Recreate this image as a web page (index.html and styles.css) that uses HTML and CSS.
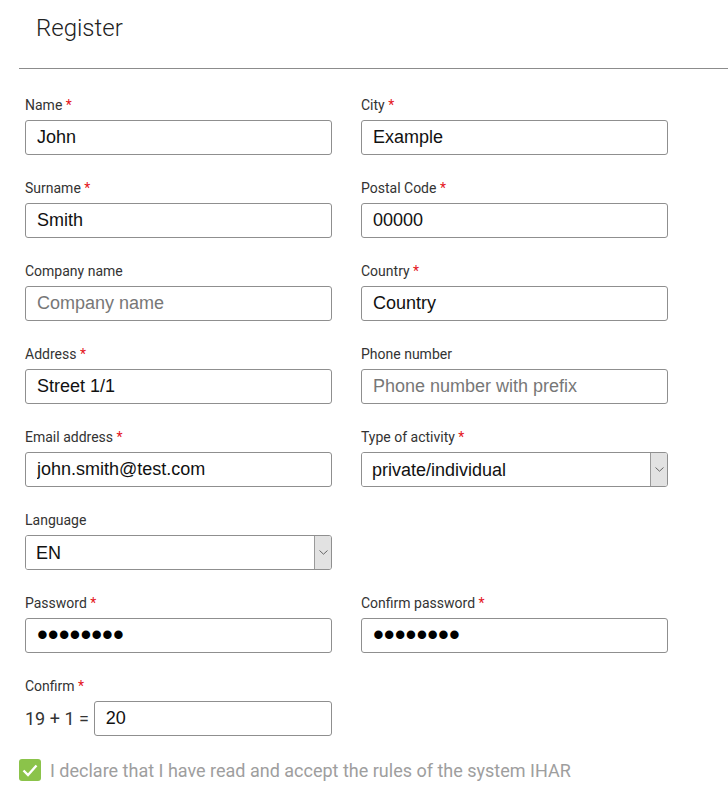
FILE: index.html
```html
<!DOCTYPE html>
<html lang="en">
    <head>
        <meta charset="UTF-8">
        <meta name="viewport" content="width=device-width, initial-scale=1.0">
        <title>Register</title>
        <link rel="stylesheet" href="styles.css">
    </head>
    <body>
        <div class="header">
            <h1>Register</h1>
        </div>

        <form class="register-form">
            <div class="field">
                <label>Name <span class="req">*</span></label>
                <input type="text" class="text-input" value="John">
            </div>
            <div class="field">
                <label>City <span class="req">*</span></label>
                <input type="text" class="text-input" value="Example">
            </div>

            <div class="field">
                <label>Surname <span class="req">*</span></label>
                <input type="text" class="text-input" value="Smith">
            </div>
            <div class="field">
                <label>Postal Code <span class="req">*</span></label>
                <input type="text" class="text-input" value="00000">
            </div>

            <div class="field">
                <label>Company name</label>
                <input type="text" class="text-input" placeholder="Company name">
            </div>
            <div class="field">
                <label>Country <span class="req">*</span></label>
                <input type="text" class="text-input" value="Country">
            </div>

            <div class="field">
                <label>Address <span class="req">*</span></label>
                <input type="text" class="text-input" value="Street 1/1">
            </div>
            <div class="field">
                <label>Phone number</label>
                <input type="text" class="text-input" placeholder="Phone number with prefix">
            </div>

            <div class="field">
                <label>Email address <span class="req">*</span></label>
                <input type="text" class="text-input" value="john.smith@test.com">
            </div>
            <div class="field">
                <label>Type of activity <span class="req">*</span></label>
                <div class="select-box">
                    <select class="select-input">
                        <option>private/individual</option>
                        <option>company</option>
                    </select>
                    <span class="select-arrow">
                        <svg width="9" height="5" viewBox="0 0 9 5"><path d="M0.5 0.5 L4.5 4.2 L8.5 0.5" fill="none" stroke="#666" stroke-width="1"/></svg>
                    </span>
                </div>
            </div>

            <div class="field">
                <label>Language</label>
                <div class="select-box">
                    <select class="select-input">
                        <option>EN</option>
                        <option>PL</option>
                    </select>
                    <span class="select-arrow">
                        <svg width="9" height="5" viewBox="0 0 9 5"><path d="M0.5 0.5 L4.5 4.2 L8.5 0.5" fill="none" stroke="#666" stroke-width="1"/></svg>
                    </span>
                </div>
            </div>
            <div class="field"></div>

            <div class="field">
                <label>Password <span class="req">*</span></label>
                <input type="password" class="text-input password" value="password">
            </div>
            <div class="field">
                <label>Confirm password <span class="req">*</span></label>
                <input type="password" class="text-input password" value="password">
            </div>

            <div class="field">
                <label>Confirm <span class="req">*</span></label>
                <div class="captcha">
                    <span class="captcha-question">19 + 1 =</span>
                    <input type="text" class="text-input" value="20">
                </div>
            </div>
        </form>

        <div class="rules">
            <span class="checkbox">
                <svg width="16" height="13" viewBox="0 0 16 13"><path d="M1.5 6.5 L6 11 L14.5 1.5" fill="none" stroke="white" stroke-width="2.4"/></svg>
            </span>
            <span class="rules-text">I declare that I have read and accept the rules of the system IHAR</span>
        </div>
    </body>
</html>
```

FILE: styles.css
```css
body {
    margin: 0;
    font-family: 'Roboto', sans-serif;
    color: #333;
    background: white;
}

.header {
    margin-left: 19px;
    padding: 13px 0 0 17px;
    height: 55px;
    border-bottom: 1px solid #8c8c8c;
}

h1 {
    margin: 0;
    font-size: 24px;
    font-weight: 300;
    color: #222;
    line-height: 30px;
}

.register-form {
    display: grid;
    grid-template-columns: 307px 307px;
    column-gap: 29px;
    row-gap: 24px;
    padding: 27px 0 0 25px;
}

.field label {
    display: block;
    font-size: 14px;
    line-height: 18px;
    margin-bottom: 6px;
    color: #333;
}

.req {
    color: #e4141b;
}

.text-input {
    box-sizing: border-box;
    width: 100%;
    height: 35px;
    margin: 0;
    padding: 0 11px;
    border: 1px solid #8f8f8f;
    border-radius: 3px;
    font-family: 'Liberation Sans', Arial, sans-serif;
    font-size: 18px;
    color: #111;
    background: white;
}

.text-input::placeholder {
    color: #777;
}

.password {
    font-size: 31px;
    color: #000;
    padding-bottom: 2px;
}

.select-box {
    box-sizing: border-box;
    display: flex;
    height: 35px;
    border: 1px solid #8f8f8f;
    border-radius: 3px;
    overflow: hidden;
}

.select-input {
    flex: 1;
    appearance: none;
    -webkit-appearance: none;
    border: none;
    margin: 0;
    padding: 0 10px;
    font-family: 'Liberation Sans', Arial, sans-serif;
    font-size: 18px;
    color: #111;
    background: white;
    outline: none;
}

.select-arrow {
    width: 16px;
    display: flex;
    align-items: center;
    justify-content: center;
    background: #e2e2e2;
    border-left: 1px solid #9a9a9a;
}

.captcha {
    display: flex;
    align-items: center;
}

.captcha-question {
    font-size: 18px;
    color: #333;
    margin-right: 5px;
    white-space: nowrap;
}

.captcha .text-input {
    flex: 1;
}

.rules {
    display: flex;
    align-items: center;
    margin: 23px 0 0 19px;
}

.checkbox {
    width: 22px;
    height: 22px;
    border-radius: 3px;
    background: #8bc34a;
    display: flex;
    align-items: center;
    justify-content: center;
    margin-right: 9px;
}

.rules-text {
    font-size: 18px;
    color: #9e9e9e;
}
```
